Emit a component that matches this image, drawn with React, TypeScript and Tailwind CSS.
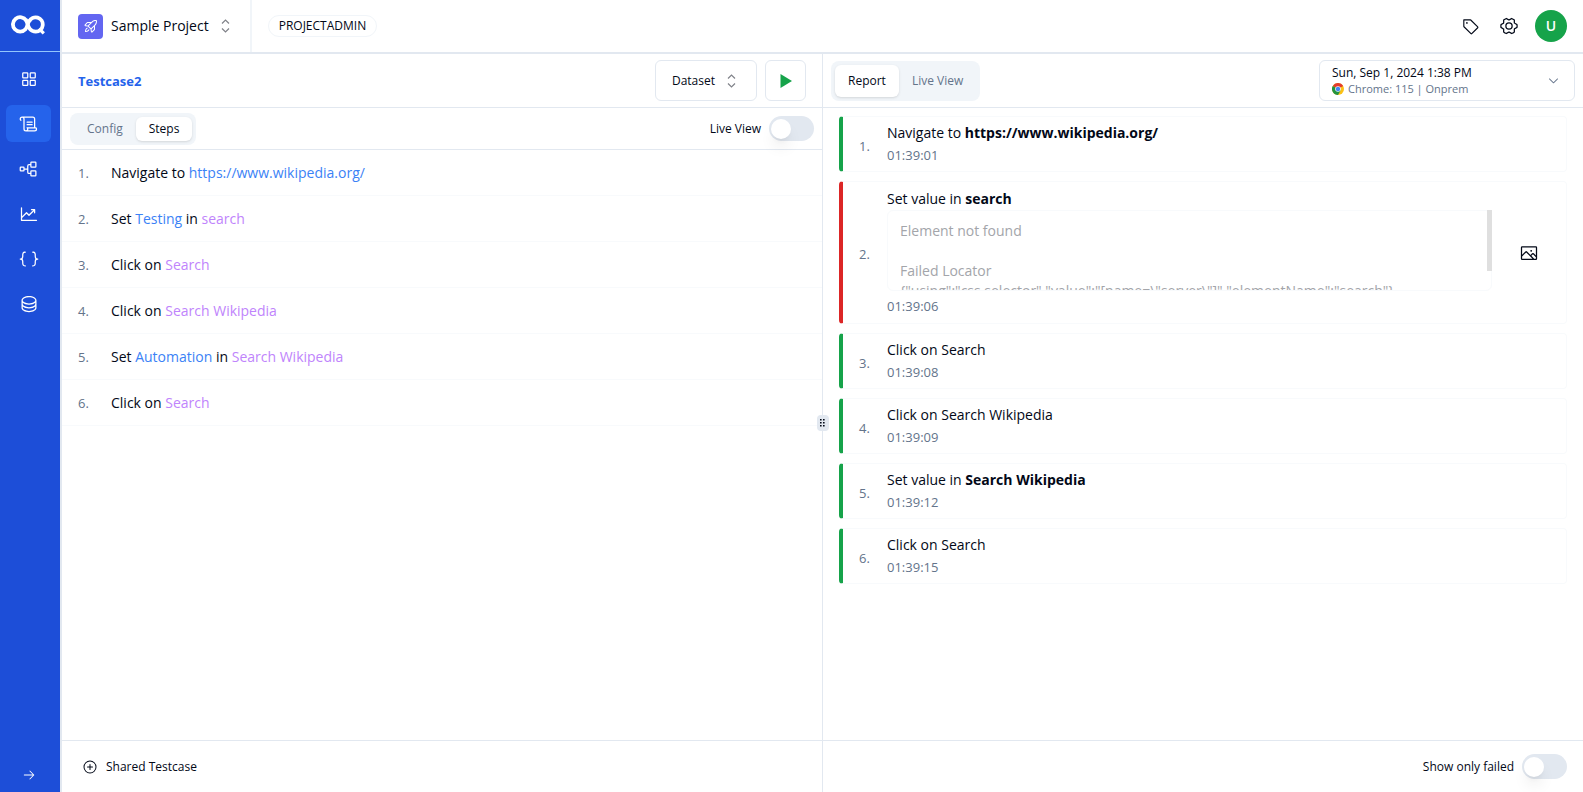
import type { ReactNode } from 'react'
import {
  PiArrowRight,
  PiBracketsCurly,
  PiCaretDown,
  PiChartLineUp,
  PiDatabase,
  PiGearSix,
  PiImage,
  PiPlusCircle,
  PiRocketLaunch,
  PiScroll,
  PiSquaresFour,
  PiTag,
  PiTreeStructure,
} from 'react-icons/pi'

const navItems = [
  { label: 'Dashboard', icon: PiSquaresFour },
  { label: 'Testcases', icon: PiScroll, active: true },
  { label: 'Suites', icon: PiTreeStructure },
  { label: 'Analytics', icon: PiChartLineUp },
  { label: 'Variables', icon: PiBracketsCurly },
  { label: 'Data', icon: PiDatabase },
]

const steps: ReactNode[] = [
  <>Navigate to <Value>https://www.wikipedia.org/</Value></>,
  <>Set <Value>Testing</Value> in <Target>search</Target></>,
  <>Click on <Target>Search</Target></>,
  <>Click on <Target>Search Wikipedia</Target></>,
  <>Set <Value>Automation</Value> in <Target>Search Wikipedia</Target></>,
  <>Click on <Target>Search</Target></>,
]

const results: { text: ReactNode; time: string; error?: string }[] = [
  { text: <>Navigate to <b>https://www.wikipedia.org/</b></>, time: '01:39:01' },
  {
    text: <>Set value in <b>search</b></>,
    time: '01:39:06',
    error:
      'Element not found\n\nFailed Locator\n{"using":"css selector","value":"[name=\\"server\\"]","elementName":"search"}',
  },
  { text: 'Click on Search', time: '01:39:08' },
  { text: 'Click on Search Wikipedia', time: '01:39:09' },
  { text: <>Set value in <b>Search Wikipedia</b></>, time: '01:39:12' },
  { text: 'Click on Search', time: '01:39:15' },
]

function Value({ children }: { children: ReactNode }) {
  return <span className="text-[#3b82f6]">{children}</span>
}

function Target({ children }: { children: ReactNode }) {
  return <span className="text-[#c084fc]">{children}</span>
}

function Logo() {
  return (
    <svg width="34" height="20" viewBox="0 0 34 20" fill="none" stroke="white" strokeWidth="3.8">
      <path d="M15.2 5.5 A7.2 7.2 0 1 0 14.5 14.2 C16.5 12 16.6 7.5 18.6 5.2" />
      <path d="M14.6 4.4 C17 7.5 16.6 16.6 24.8 16.6 A7.1 7.1 0 1 0 18.2 6.5" />
      <path d="M28 13.6 L32.8 18.4" strokeWidth="3.2" />
    </svg>
  )
}

function Sorter() {
  return (
    <svg width="9" height="14" viewBox="0 0 9 14" fill="none" stroke="#808289" strokeWidth="1.2">
      <path d="M1 4.5 L4.5 1 L8 4.5 M1 9.5 L4.5 13 L8 9.5" />
    </svg>
  )
}

function Chrome() {
  return (
    <svg width="12" height="12" viewBox="0 0 12 12">
      <circle cx="6" cy="6" r="6" fill="#fbc116" />
      <path d="M6 6 L0.8 3 A6 6 0 0 1 11.2 3 Z" fill="#e33b2e" />
      <path d="M6 6 L0.8 3 A6 6 0 0 0 6 12 L8.6 7.5 Z" fill="#229342" />
      <circle cx="6" cy="6" r="2.8" fill="white" />
      <circle cx="6" cy="6" r="2.2" fill="#4285f4" />
    </svg>
  )
}

function Toggle({ label }: { label: string }) {
  return (
    <label className="flex cursor-pointer items-center gap-2 text-xs font-medium">
      {label}
      <input type="checkbox" role="switch" className="peer sr-only" />
      <span className="flex h-[25px] w-[45px] items-center rounded-full bg-[#e2e8f0] p-0.5 peer-checked:justify-end peer-checked:bg-[#2563eb]">
        <span className="size-5 rounded-full bg-white shadow-lg" />
      </span>
    </label>
  )
}

function Tabs({ items, active, tall }: { items: string[]; active: string; tall?: boolean }) {
  return (
    <div
      role="tablist"
      className={`flex rounded-lg bg-[#f1f5f9] p-1 text-xs font-medium text-[#64748b] ${tall ? 'h-10' : 'h-8'}`}
    >
      {items.map((item) => (
        <button
          key={item}
          role="tab"
          aria-selected={item === active}
          className={`rounded-md px-[13px] ${item === active ? 'bg-white text-[#020817] shadow-sm' : ''}`}
        >
          {item}
        </button>
      ))}
    </div>
  )
}

export default function App() {
  return (
    <div className="flex h-screen bg-white font-['Open_Sans','Noto_Sans',sans-serif] text-sm text-[#020817]">
      <aside className="flex w-[62px] shrink-0 flex-col border-r-2 border-[#e2e8f0] bg-[#1d4ed8] text-white">
        <div className="flex h-[52px] items-center justify-center border-b border-[#93c5fd] pr-1 pb-0.5">
          <Logo />
        </div>
        <nav className="flex flex-col gap-2 pt-2 pr-[9px] pl-1.5">
          {navItems.map(({ label, icon: Icon, active }) => (
            <a
              key={label}
              href="#"
              aria-label={label}
              className={`flex h-[37px] items-center justify-center rounded-md ${active ? 'bg-[#2563eb]' : ''}`}
            >
              <Icon size={20} />
            </a>
          ))}
        </nav>
        <button aria-label="Expand sidebar" className="mt-auto mb-2.5 ml-[22px] self-start">
          <PiArrowRight size={14} />
        </button>
      </aside>

      <div className="flex min-w-0 flex-1 flex-col">
        <header className="flex h-[54px] shrink-0 items-center border-b-2 border-[#e2e8f0] px-4">
          <button className="flex items-center gap-2 font-medium">
            <span className="flex size-[25px] items-center justify-center rounded bg-[#6366f1] text-white">
              <PiRocketLaunch size={16} />
            </span>
            <span>Sample Project</span>
            <span className="pl-1"><Sorter /></span>
          </button>
          <div className="ml-5 h-full w-0.5 bg-[#f1f5f9]" />
          <span className="ml-4 rounded-full border border-[#f1f5f9] px-2.5 py-0.5 text-xs font-medium">
            PROJECTADMIN
          </span>
          <div className="ml-auto flex items-center gap-4">
            <button aria-label="Tags" className="p-1"><PiTag size={18} /></button>
            <button aria-label="Settings"><PiGearSix size={20} /></button>
            <button aria-label="Account" className="flex size-8 items-center justify-center rounded-full bg-[#16a34a] text-sm font-semibold text-white">
              U
            </button>
          </div>
        </header>

        <div className="flex min-h-0 flex-1">
          <section className="flex min-w-0 flex-1 flex-col">
            <div className="flex h-[54px] shrink-0 items-center gap-2 border-b border-[#e2e8f0] px-4">
              <h1 className="mr-auto pt-0.5 text-[13px] font-bold text-[#2563eb]">Testcase2</h1>
              <button className="flex h-[41px] items-center gap-3 rounded-md border border-[#e2e8f0] pr-5 pl-4 text-xs font-medium">
                Dataset <Sorter />
              </button>
              <button aria-label="Run" className="flex size-[41px] items-center justify-center rounded-md border border-[#e2e8f0]">
                <svg width="12" height="14" viewBox="0 0 12 14" fill="#16a34a">
                  <path d="M0.5 0 L12 7 L0.5 14 Z" />
                </svg>
              </button>
            </div>
            <div className="flex h-[42px] shrink-0 items-center justify-between border-b border-[#e2e8f0] px-2">
              <Tabs items={['Config', 'Steps']} active="Steps" />
              <Toggle label="Live View" />
            </div>
            <ol className="flex-1">
              {steps.map((step, i) => (
                <li key={i} className="flex h-[46px] items-center border-b border-[#f8fafc] pl-4">
                  <span className="w-[33px] pt-0.5 text-[13px] text-[#64748b]">{i + 1}.</span>
                  <span>{step}</span>
                </li>
              ))}
            </ol>
            <footer className="flex h-[52px] shrink-0 items-center border-t border-[#e2e8f0] px-5">
              <button className="flex items-center gap-2 text-xs font-medium">
                <PiPlusCircle size={16} /> Shared Testcase
              </button>
            </footer>
          </section>

          <div role="separator" aria-orientation="vertical" className="relative w-px bg-[#e2e8f0]">
            <span className="absolute top-1/2 left-1/2 flex h-4 w-3 -translate-x-1/2 -translate-y-1/2 items-center justify-center rounded bg-[#e2e8f0]">
              <svg width="5" height="8" viewBox="0 0 5 8" fill="#020817">
                <path d="M0 0h1.6v1.6H0zM3 0h1.6v1.6H3zM0 3h1.6v1.6H0zM3 3h1.6v1.6H3zM0 6h1.6v1.6H0zM3 6h1.6v1.6H3z" />
              </svg>
            </span>
          </div>

          <section className="flex min-w-0 flex-1 flex-col">
            <div className="flex h-[54px] shrink-0 items-center justify-between border-b border-[#e2e8f0] px-2">
              <Tabs items={['Report', 'Live View']} active="Report" tall />
              <button className="flex h-[41px] w-[256px] items-center justify-between rounded-md border border-[#e2e8f0] pr-3.5 pl-3 text-left text-xs">
                <span>
                  <span className="block font-medium">Sun, Sep 1, 2024 1:38 PM</span>
                  <span className="flex items-center gap-1 text-[11px] leading-4 text-[#64748b]">
                    <Chrome /> Chrome: 115 | Onprem
                  </span>
                </span>
                <PiCaretDown size={13} className="text-[#64748b]" />
              </button>
            </div>
            <ol className="flex flex-1 flex-col gap-[9px] px-4 pt-2">
              {results.map(({ text, time, error }, i) => (
                <li
                  key={i}
                  className={`flex items-center rounded border border-l-4 border-[#f8fafc] pl-4 ${error ? 'h-[143px] border-l-[#dc2626]' : 'h-14 border-l-[#16a34a]'}`}
                >
                  <span className="w-7 pt-1 text-[13px] text-[#64748b]">{i + 1}.</span>
                  <div className="min-w-0 flex-1">
                    <p className="leading-[22px]">{text}</p>
                    {error && (
                      <div className="relative mb-1">
                        <textarea
                          readOnly
                          aria-label="Failure details"
                          value={error}
                          className="block h-[81px] w-full resize-none rounded-md border border-[#f8fafc] px-3 py-2.5 leading-5 text-[#a3a5aa] [scrollbar-width:none]"
                        />
                        <span className="absolute top-0 right-0 h-[61px] w-[5px] bg-[#dfdfdf]" />
                      </div>
                    )}
                    <p className="text-[13px] leading-[22px] text-[#64748b]">{time}</p>
                  </div>
                  {error && (
                    <button aria-label="Screenshot" className="px-[27px]"><PiImage size={20} /></button>
                  )}
                </li>
              ))}
            </ol>
            <footer className="flex h-[52px] shrink-0 items-center justify-end border-t border-[#e2e8f0] px-4">
              <Toggle label="Show only failed" />
            </footer>
          </section>
        </div>
      </div>
    </div>
  )
}
